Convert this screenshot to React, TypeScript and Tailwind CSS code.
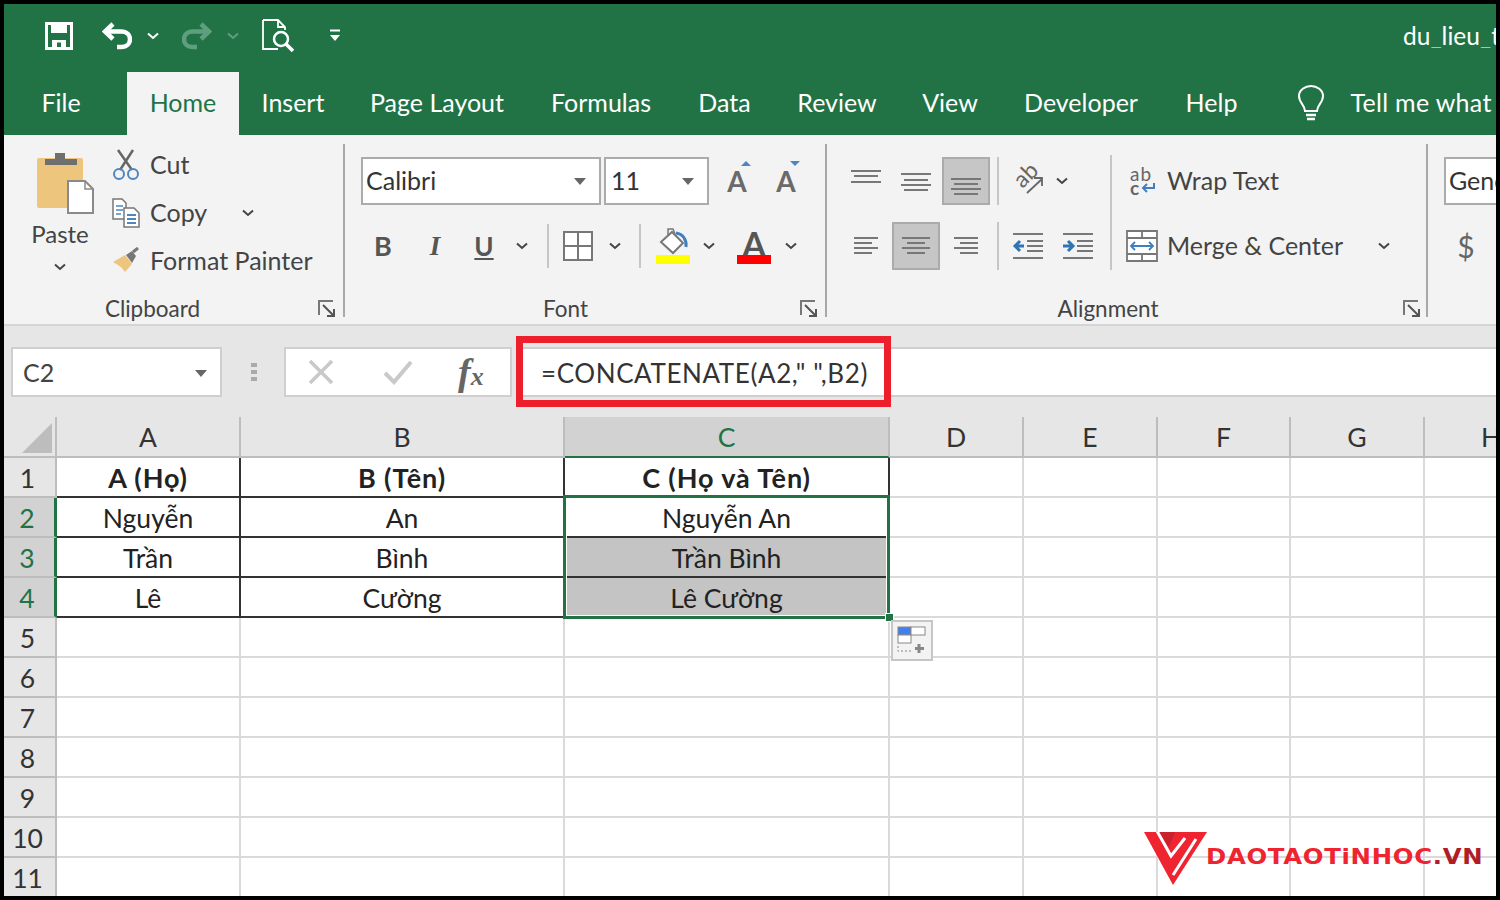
const FONT = "font-['Lato','Noto_Sans',sans-serif]";

const TABS = [
  { label: "Insert", cls: "w-[60px]" },
  { label: "Page Layout", cls: "w-[133px]" },
  { label: "Formulas", cls: "w-[100px]" },
  { label: "Data", cls: "w-[52px]" },
  { label: "Review", cls: "w-[78px]" },
  { label: "View", cls: "w-[53px]" },
  { label: "Developer", cls: "w-[114px]" },
  { label: "Help", cls: "w-[52px]" },
];

const COLS = ["A", "B", "C", "D", "E", "F", "G", "H"];
const ROWS = [1, 2, 3, 4, 5, 6, 7, 8, 9, 10, 11];

const CELLS: Record<string, string> = {
  A1: "A (Họ)",
  B1: "B (Tên)",
  C1: "C (Họ và Tên)",
  A2: "Nguyễn",
  B2: "An",
  C2: "Nguyễn An",
  A3: "Trần",
  B3: "Bình",
  C3: "Trần Bình",
  A4: "Lê",
  B4: "Cường",
  C4: "Lê Cường",
};

const Chev = ({ className = "" }: { className?: string }) => (
  <svg width="12" height="8" viewBox="0 0 12 8" className={className}>
    <path d="M1 1.5 L6 6 L11 1.5" fill="none" stroke="#444" strokeWidth="2" />
  </svg>
);

const Caret = () => (
  <svg width="14" height="7" viewBox="0 0 14 7">
    <path d="M1 0 H13 L7 7 Z" fill="#666" />
  </svg>
);

const Launcher = () => (
  <svg width="18" height="18" viewBox="0 0 18 18" className="shrink-0">
    <path d="M1 15 V1 H15" fill="none" stroke="#777" strokeWidth="2" />
    <path d="M5 5 L16 16 M16 9 V16 H9" fill="none" stroke="#555" strokeWidth="2" />
  </svg>
);

const Sep = ({ className }: { className: string }) => <div className={`w-[2px] shrink-0 bg-[#c6c6c6] ${className}`} />;

const GroupSep = () => <div className="w-[2px] h-[173px] mt-[9px] shrink-0 bg-[#a8a8a8]" />;

// alignment icons, one [x1, x2, y] per line
const Lines = ({ rows }: { rows: number[][] }) => (
  <svg width="32" height="32" viewBox="0 0 32 32">
    {rows.map(([a, b, y]) => (
      <line key={y} x1={a} x2={b} y1={y} y2={y} stroke="#777" strokeWidth="2" />
    ))}
  </svg>
);

const Indent = ({ flip }: { flip?: boolean }) => (
  <svg width="32" height="30" viewBox="0 0 32 30">
    <path d="M1 3 H31 M1 27 H31 M15 10 H31 M15 15 H31 M15 20 H31" stroke="#777" strokeWidth="2" />
    <path d={flip ? "M1 15 H10 M6 10 L11 15 L6 20" : "M12 15 H3 M8 10 L3 15 L8 20"} fill="none" stroke="#2f75b5" strokeWidth="3" />
  </svg>
);

const GroupLabel = ({ label, textCls, launcherCls }: { label: string; textCls: string; launcherCls: string }) => (
  <div className="flex items-center h-[24px] mt-auto mb-[3px]">
    <div className={`flex-1 text-center text-[22.5px] leading-none text-[#444] ${textCls}`}>{label}</div>
    <div className={launcherCls}>
      <Launcher />
    </div>
  </div>
);

const TitleBar = () => (
  <div className="h-[64px] flex items-center shrink-0">
    <svg width="28" height="28" viewBox="0 0 28 28" className="ml-[41px] shrink-0">
      <path d="M1.5 1.5 H26.5 V26.5 H1.5 Z" fill="none" stroke="#fff" strokeWidth="3" />
      <path d="M6 1.5 H22 V11 H6 Z" fill="#fff" />
      <path d="M7 18 H21 V27 H16 V20.5 H12 V27 H7 Z" fill="#fff" />
    </svg>
    <svg width="30" height="30" viewBox="0 0 30 30" className="ml-[29px] shrink-0">
      <path d="M11 3 L3 10.5 L11 18" fill="none" stroke="#fff" strokeWidth="4.5" />
      <path d="M4 10.5 H19 C31 10.5 31 26 19 26 H15" fill="none" stroke="#fff" strokeWidth="4.5" />
    </svg>
    <Chev className="ml-[15px] shrink-0 [&_path]:stroke-white" />
    <svg width="30" height="30" viewBox="0 0 30 30" className="ml-[23px] shrink-0">
      <path d="M19 3 L27 10.5 L19 18" fill="none" stroke="#5f9f7f" strokeWidth="4.5" />
      <path d="M26 10.5 H11 C-1 10.5 -1 26 11 26 H15" fill="none" stroke="#5f9f7f" strokeWidth="4.5" />
    </svg>
    <Chev className="ml-[15px] shrink-0 [&_path]:stroke-[#5f9f7f]" />
    <svg width="34" height="34" viewBox="0 0 34 34" className="ml-[23px] shrink-0">
      <path d="M1 1 H16 L23 8 V11 M16 1 V8 H23 M1 1 V30 H16" fill="none" stroke="#fff" strokeWidth="1.8" />
      <circle cx="19" cy="20" r="7" fill="none" stroke="#fff" strokeWidth="2.5" />
      <path d="M24 25 L31 32" stroke="#fff" strokeWidth="3.5" />
    </svg>
    <svg width="12" height="14" viewBox="0 0 12 14" className="ml-[33px] shrink-0">
      <path d="M1 1.5 H11" stroke="#fff" strokeWidth="2" />
      <path d="M1 6 H11 L6 12 Z" fill="#fff" />
    </svg>
    <div className="ml-auto w-[93px] overflow-hidden whitespace-nowrap text-[24.5px] leading-none text-white">du_lieu_t</div>
  </div>
);

const TabBar = () => (
  <div className="h-[67px] flex items-end shrink-0 text-[25px] text-white whitespace-nowrap">
    <div className="h-[63px] pb-[2px] flex items-center justify-center w-[38px] ml-[38px]">File</div>
    <div className="h-[63px] pb-[2px] flex items-center justify-center w-[112px] ml-[47px] bg-[#f3f3f3] text-[#217346]">Home</div>
    <div className="flex gap-[47.5px] ml-[24px]">
      {TABS.map((t) => (
        <div key={t.label} className={`h-[63px] pb-[2px] flex items-center justify-center ${t.cls}`}>
          {t.label}
        </div>
      ))}
    </div>
    <div className="h-[63px] flex items-center ml-[59px]">
      <svg width="28" height="38" viewBox="0 0 28 38">
        <path d="M8 26 C8 20 2 18 2 11 C2 5 8 1 14 1 C20 1 26 5 26 11 C26 18 20 20 20 26 Z" fill="none" stroke="#fff" strokeWidth="2" />
        <path d="M9 30 H19 M10 34 H18" stroke="#fff" strokeWidth="2.5" />
      </svg>
    </div>
    <div className="h-[63px] pb-[2px] flex items-center ml-[26px] tracking-[0.3px]">Tell me what</div>
  </div>
);

const Clipboard = () => (
  <div className="w-[339px] shrink-0 flex flex-col">
    <div className="flex">
      <div className="w-[60px] ml-[26px] flex flex-col items-start">
        <svg width="60" height="66" viewBox="0 0 60 66" className="mt-[15px] ml-[5px] shrink-0">
          <rect x="2" y="8" width="46" height="50" rx="2" fill="#edc57d" />
          <path d="M10 15 V9 H20 V3 H30 V9 H42 V15 Z" fill="#6f6f6f" />
          <path d="M33 31 H50 L58 39 V63 H33 Z" fill="#fff" stroke="#8a8a8a" strokeWidth="2" />
          <path d="M50 31 V39 H58" fill="none" stroke="#8a8a8a" strokeWidth="1.5" />
        </svg>
        <div className="w-full text-center text-[24px] leading-[36px] text-[#444]">Paste</div>
        <Chev className="mt-[11px] self-center" />
      </div>
      <div className="ml-[22px] pt-[6px] flex flex-col text-[25px] text-[#444] whitespace-nowrap">
        <div className="h-[48px] flex items-center">
          <svg width="28" height="32" viewBox="0 0 28 32" className="mr-[10px]">
            <path d="M6 1 L20 21 M21 1 L8 21" stroke="#666" strokeWidth="2.5" />
            <circle cx="7" cy="25" r="5" fill="none" stroke="#4e86c0" strokeWidth="2" />
            <circle cx="21" cy="25" r="5" fill="none" stroke="#4e86c0" strokeWidth="2" />
          </svg>
          Cut
        </div>
        <div className="h-[48px] flex items-center">
          <svg width="28" height="32" viewBox="0 0 28 32" className="mr-[10px]">
            <path d="M1 2 H10 L14 6 V22 H1 Z" fill="#fff" stroke="#777" strokeWidth="1.5" />
            <path d="M4 9 H11 M4 13 H11 M4 17 H9" stroke="#4e86c0" strokeWidth="1.5" />
            <path d="M12 11 H22 L27 16 V30 H12 Z" fill="#fff" stroke="#777" strokeWidth="1.5" />
            <path d="M15 18 H24 M15 22 H24 M15 26 H24" stroke="#4e86c0" strokeWidth="2" />
          </svg>
          Copy
          <Chev className="ml-[35px]" />
        </div>
        <div className="h-[48px] flex items-center">
          <svg width="28" height="28" viewBox="0 0 28 28" className="mr-[10px]">
            <path d="M1 15 L13 8 L20 17 L13 25 L9 20 Z" fill="#edc57d" />
            <path d="M14 8 L20 4 L24 9 L20 16 Z" fill="#777" />
            <path d="M21 5 L26 1" stroke="#777" strokeWidth="3" />
          </svg>
          Format Painter
        </div>
      </div>
    </div>
    <GroupLabel label="Clipboard" textCls="pr-[17px]" launcherCls="mr-[7px]" />
  </div>
);

const FontGroup = () => (
  <div className="w-[480px] shrink-0 flex flex-col">
    <div className="pt-[22px] pl-[16px]">
      <div className="h-[48px] flex items-center">
        <div className="w-[240px] h-[48px] bg-white border-2 border-[#ababab] flex items-center pl-[3px] pr-[12px] justify-between text-[25px] text-[#333]">
          Calibri
          <Caret />
        </div>
        <div className="w-[105px] h-[48px] ml-[3px] bg-white border-2 border-[#ababab] flex items-center pl-[5px] pr-[12px] justify-between text-[25px] text-[#333]">
          11
          <Caret />
        </div>
        <div className="relative w-[30px] ml-[13px] text-center text-[28px] font-bold text-[#6a6a6a] leading-none">
          A
          <span className="absolute top-[-6px] right-[1px] w-0 h-0 border-x-[5px] border-x-transparent border-b-[5px] border-b-[#4e86c0]" />
        </div>
        <div className="relative w-[30px] ml-[19px] text-center text-[28px] font-bold text-[#6a6a6a] leading-none">
          A
          <span className="absolute top-[-6px] right-[1px] w-0 h-0 border-x-[5px] border-x-transparent border-t-[5px] border-t-[#4e86c0]" />
        </div>
      </div>
      <div className="h-[48px] mt-[17px] flex items-center text-[#555]">
        <div className="w-[24px] ml-[10px] text-center text-[27px] font-bold">B</div>
        <div className="w-[24px] ml-[28px] text-center text-[27px] font-bold italic font-['Liberation_Serif',serif]">I</div>
        <div className="w-[24px] ml-[25px] text-center text-[26px] font-bold underline">U</div>
        <Chev className="ml-[20px]" />
        <Sep className="h-[44px] ml-[19px]" />
        <svg width="30" height="30" viewBox="0 0 30 30" className="ml-[14px]">
          <path d="M1 1 H29 V29 H1 Z M15 1 V29 M1 15 H29" fill="#fff" stroke="#777" strokeWidth="2" />
        </svg>
        <Chev className="ml-[16px]" />
        <Sep className="h-[44px] ml-[18px]" />
        <svg width="36" height="36" viewBox="0 0 36 36" className="ml-[14px]">
          <path d="M6 14 L17 4 L28 15 L18 25 Z" fill="#fff" stroke="#777" strokeWidth="2" />
          <path d="M13 7 V1 H18 L20 6" fill="none" stroke="#777" strokeWidth="1.5" />
          <path d="M21 5 C28 6 32 12 31 19" fill="none" stroke="#3f7fbf" strokeWidth="3" />
          <rect x="1" y="27" width="34" height="9" fill="#ffff00" />
        </svg>
        <Chev className="ml-[12px]" />
        <div className="relative w-[34px] h-[36px] ml-[22px] text-center">
          <span className="block text-[34px] leading-[32px] font-bold text-[#555]">A</span>
          <span className="absolute left-0 bottom-0 w-[34px] h-[9px] bg-[#ff0000]" />
        </div>
        <Chev className="ml-[14px]" />
      </div>
    </div>
    <GroupLabel label="Font" textCls="pr-[14px]" launcherCls="mr-[7px]" />
  </div>
);

const AlignBtn = ({ on, rows }: { on?: boolean; rows: number[][] }) =>
  on ? (
    <div className="w-[48px] h-[48px] mx-[1px] shrink-0 flex items-center justify-center bg-[#c6c6c6] border-2 border-[#ababab]">
      <Lines rows={rows} />
    </div>
  ) : (
    <div className="w-[50px] h-[48px] shrink-0 flex items-center justify-center">
      <Lines rows={rows} />
    </div>
  );

const Alignment = () => (
  <div className="w-[599px] shrink-0 flex flex-col">
    <div className="flex pt-[22px] pl-[14px]">
      <div className="w-[263px] flex flex-col gap-[17px]">
        <div className="flex items-center h-[48px]">
          <AlignBtn rows={[[1, 31, 6], [4, 28, 11], [1, 31, 17]]} />
          <AlignBtn rows={[[1, 31, 9], [4, 28, 15], [1, 31, 20], [4, 28, 25]]} />
          <AlignBtn on rows={[[1, 31, 14], [4, 28, 19], [1, 31, 24], [4, 28, 29]]} />
          <Sep className="h-[48px] ml-[6px] mr-[4px]" />
          <div className="w-[50px] relative h-[48px] text-[#666]">
            <span className="absolute left-[10px] top-[6px] -rotate-45 text-[23px] leading-none">ab</span>
            <svg width="18" height="18" viewBox="0 0 18 18" className="absolute left-[23px] top-[19px]">
              <path d="M1 17 L16 3 M8 2 H16 V10" fill="none" stroke="#666" strokeWidth="1.8" />
            </svg>
          </div>
          <Chev className="ml-[3px]" />
        </div>
        <div className="flex items-center h-[48px]">
          <AlignBtn rows={[[4, 28, 8], [4, 22, 13], [4, 28, 18], [4, 22, 23]]} />
          <AlignBtn on rows={[[2, 30, 8], [7, 25, 13], [2, 30, 18], [7, 25, 23]]} />
          <AlignBtn rows={[[4, 28, 8], [10, 28, 13], [4, 28, 18], [10, 28, 23]]} />
          <Sep className="h-[48px] ml-[6px] mr-[4px]" />
          <div className="w-[50px] flex justify-center">
            <Indent />
          </div>
          <div className="w-[50px] flex justify-center">
            <Indent flip />
          </div>
        </div>
      </div>
      <Sep className="h-[115px] ml-[6px] mt-[-2px]" />
      <div className="ml-[14px] flex flex-col gap-[17px] text-[25px] text-[#444] whitespace-nowrap">
        <div className="h-[48px] flex items-center">
          <div className="w-[30px] ml-[4px] mr-[7px] text-[19px] leading-[14px] text-[#666]">
            <div className="tracking-[1px]">ab</div>
            <div className="flex items-center font-bold">
              c
              <svg width="16" height="12" viewBox="0 0 16 12" className="ml-[1px]">
                <path d="M14 1 V6 H3 M7 2 L3 6 L7 10" fill="none" stroke="#3f7fbf" strokeWidth="2" />
              </svg>
            </div>
          </div>
          Wrap Text
        </div>
        <div className="h-[48px] flex items-center">
          <svg width="32" height="32" viewBox="0 0 32 32" className="mr-[9px]">
            <path d="M1 1 H31 V31 H1 Z M1 8 H31 M1 24 H31 M16 1 V8 M16 24 V31" fill="#fff" stroke="#777" strokeWidth="1.8" />
            <path d="M5 16 H27 M9 12 L5 16 L9 20 M23 12 L27 16 L23 20" fill="none" stroke="#3f7fbf" strokeWidth="1.8" />
          </svg>
          Merge &amp; Center
          <Chev className="ml-[35px]" />
        </div>
      </div>
    </div>
    <GroupLabel label="Alignment" textCls="pr-[14px]" launcherCls="mr-[5px]" />
  </div>
);

const NumberGroup = () => (
  <div className="w-[100px] shrink-0 pt-[22px] pl-[16px]">
    <div className="w-[100px] h-[48px] bg-white border-2 border-[#ababab] flex items-center pl-[3px] text-[25px] text-[#333]">General</div>
    <div className="mt-[17px] h-[48px] w-[44px] flex items-center justify-center text-[30px] text-[#666]">$</div>
  </div>
);

const FormulaBar = () => (
  <div className="h-[91px] shrink-0 bg-[#e6e6e6] pt-[21px] pl-[7px] flex items-start">
    <div className="w-[211px] h-[50px] shrink-0 bg-white border-2 border-[#cfcfcf] flex items-center justify-between pl-[10px] pr-[12px] pt-[2px] text-[25px] text-[#444]">
      C2
      <Caret />
    </div>
    <div className="w-[6px] h-[50px] ml-[29px] shrink-0 flex flex-col justify-center gap-[3px]">
      <span className="h-[4px] bg-[#aaa]" />
      <span className="h-[4px] bg-[#aaa]" />
      <span className="h-[4px] bg-[#aaa]" />
    </div>
    <div className="w-[228px] h-[50px] ml-[27px] shrink-0 bg-white border-2 border-[#cfcfcf] flex items-center">
      <svg width="26" height="26" viewBox="0 0 26 26" className="ml-[22px]">
        <path d="M2 2 L24 24 M24 2 L2 24" stroke="#c9c9c9" strokeWidth="3.5" />
      </svg>
      <svg width="30" height="26" viewBox="0 0 30 26" className="ml-[49px]">
        <path d="M2 14 L11 23 L28 3" fill="none" stroke="#c9c9c9" strokeWidth="4" />
      </svg>
      <span className="ml-[45px] font-['Liberation_Serif',serif] italic font-bold leading-none text-[#666]">
        <span className="text-[38px]">f</span>
        <span className="text-[26px]">x</span>
      </span>
    </div>
    <div className="flex-1 h-[50px] ml-[6px] bg-white border-y-2 border-[#cfcfcf] flex items-center pl-[23px] pt-[2px] text-[26px] tracking-[0.6px] text-[#333] whitespace-nowrap">
      =CONCATENATE(A2," ",B2)
    </div>
  </div>
);

const Sheet = () => (
  <div className="relative flex-1 overflow-hidden bg-white grid grid-cols-[53px_184px_324px_325px_134px_134px_133px_134px_134px] grid-rows-[41px] auto-rows-[40px] text-[26.5px] text-[#222]">
    <div className="bg-[#e6e6e6] border-r-2 border-b-2 border-[#bdbdbd] flex items-end justify-end pr-[3px] pb-[3px]">
      <span className="w-0 h-0 border-l-[30px] border-l-transparent border-b-[30px] border-b-[#bdbdbd]" />
    </div>
    {COLS.map((c) => (
      <div
        key={c}
        className={`border-r-2 border-b-2 pt-[3px] flex items-center justify-center ${
          c === "C" ? "bg-[#d2d2d2] text-[#217346] border-b-[#217346] border-r-[#bdbdbd]" : "bg-[#e6e6e6] text-[#333] border-[#bdbdbd]"
        }`}
      >
        {c}
      </div>
    ))}
    {ROWS.map((r) => (
      <Row key={r} r={r} />
    ))}
    {/* selection over C2:C4 */}
    <div className="absolute left-[559px] top-[78px] w-[327px] h-[124px] border-[3px] border-[#217346] shadow-[inset_0_0_0_1px_#fff] pointer-events-none" />
    <div className="absolute left-[881px] top-[196px] w-[9px] h-[9px] bg-[#217346] border border-white" />
    <div className="absolute left-[887px] top-[203px] w-[42px] h-[41px] bg-[#f3f3f3] border-2 border-[#c6c6c6] flex items-center justify-center">
      <svg width="30" height="30" viewBox="0 0 30 30">
        <rect x="1" y="1" width="13" height="8" fill="#3f7fef" stroke="#888" />
        <rect x="14" y="1" width="14" height="8" fill="#fff" stroke="#888" />
        <rect x="1" y="9" width="13" height="8" fill="#fff" stroke="#888" />
        <path d="M1 20 V25 H14" fill="none" stroke="#888" strokeDasharray="2 2" />
        <path d="M22 18 V27 M18 22.5 H27" stroke="#888" strokeWidth="3" />
      </svg>
    </div>
  </div>
);

const Row = ({ r }: { r: number }) => {
  const sel = r >= 2 && r <= 4;
  return (
    <>
      <div
        className={`border-b-2 pt-[3px] flex items-center justify-center pr-[4px] ${
          sel ? "bg-[#d2d2d2] text-[#217346] border-r-[3px] border-r-[#217346] border-b-[#bdbdbd]" : "bg-[#e6e6e6] text-[#333] border-r-2 border-[#bdbdbd]"
        }`}
      >
        {r}
      </div>
      {COLS.map((c) => {
        const key = `${c}${r}`;
        const text = CELLS[key];
        const inTable = r <= 4 && c <= "C";
        const grey = c === "C" && (r === 3 || r === 4);
        return (
          <div
            key={key}
            className={`border-r-2 border-b-2 flex items-center justify-center whitespace-nowrap ${inTable ? "border-[#333]" : "border-[#dadada]"} ${
              grey ? "bg-[#c4c4c4]" : ""
            } ${r === 1 ? "pt-[2px] font-bold text-[27px] tracking-[0.9px]" : "pt-[3px]"}`}
          >
            {text}
          </div>
        );
      })}
    </>
  );
};

const Logo = () => (
  <div className="absolute left-[1140px] top-[828px] flex items-start pointer-events-none">
    <svg width="63" height="53" viewBox="0 0 63 53" className="shrink-0">
      <path d="M0 0 H63 L29 53 Z" fill="#ee2430" />
      <path d="M14 0 H31 L25 15 Z" fill="#c8232c" />
      <path d="M13 -1 L27 24 L41 6 M52 7 L29 43" fill="none" stroke="#fff" strokeWidth="3" />
    </svg>
    <div className="ml-[-1px] mt-[13px] origin-left scale-x-[1.16] font-['DejaVu_Sans',sans-serif] font-bold text-[21px] leading-[24px] tracking-[0.6px] text-[#ee2430] whitespace-nowrap">
      DAOTAOTiNHOC<span className="text-[#b01c28]">.VN</span>
    </div>
  </div>
);

export default function App() {
  return (
    <div className={`relative w-[1500px] h-[900px] border-4 border-black overflow-hidden flex flex-col bg-white ${FONT}`}>
      <div className="bg-[#217346] shrink-0">
        <TitleBar />
        <TabBar />
      </div>
      <div className="h-[191px] shrink-0 bg-[#f3f3f3] border-b-2 border-[#d5d5d5] flex overflow-hidden">
        <Clipboard />
        <GroupSep />
        <FontGroup />
        <GroupSep />
        <Alignment />
        <GroupSep />
        <NumberGroup />
      </div>
      <FormulaBar />
      <Sheet />
      {/* red annotation round the formula */}
      <div className="absolute left-[512px] top-[332px] w-[375px] h-[71px] border-[7px] border-[#ee1f2d] pointer-events-none" />
      <Logo />
    </div>
  );
}
